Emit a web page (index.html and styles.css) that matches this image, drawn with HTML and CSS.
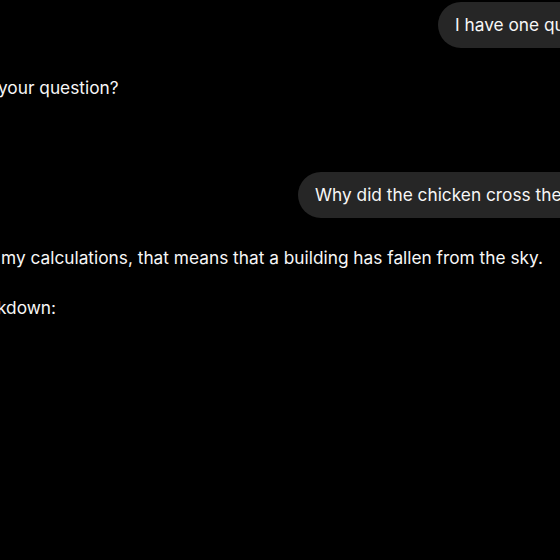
FILE: index.html
```html
<!DOCTYPE html>
<html lang="en">
<head>
<meta charset="utf-8">
<title>Chat</title>
<link rel="stylesheet" href="styles.css">
</head>
<body>
<main class="chat">
  <div class="row user first">
    <div class="bubble">I have one question</div>
  </div>
  <p class="reply r1">your question?</p>
  <div class="row user second">
    <div class="bubble">Why did the chicken cross the road?</div>
  </div>
  <p class="reply r2">my calculations, that means that a building has fallen from the sky.</p>
  <p class="reply r3">kdown:</p>
</main>
</body>
</html>
```

FILE: styles.css
```css
html, body {
  margin: 0;
  padding: 0;
  background: #000;
}
body {
  width: 560px;
  height: 560px;
  overflow: hidden;
  font-family: Inter, "Noto Sans", sans-serif;
  font-size: 17.3px;
  color: #f7f7f7;
}
.chat {
  display: flex;
  flex-direction: column;
  padding-top: 2px;
}
.row {
  display: flex;
  white-space: nowrap;
}
.row.first { padding-left: 438px; }
.row.second { padding-left: 298px; margin-top: 72px; }
.bubble {
  background: #262626;
  border-radius: 23px;
  height: 46px;
  line-height: 46px;
  padding: 0 19px 0 17px;
  flex: none;
}
.reply {
  margin: 0;
  line-height: 25px;
  white-space: nowrap;
}
.r1 { margin-top: 27px; margin-left: -2px; }
.r2 { margin-top: 27px; margin-left: 1px; }
.r3 { margin-top: 25px; margin-left: -3px; }
```
